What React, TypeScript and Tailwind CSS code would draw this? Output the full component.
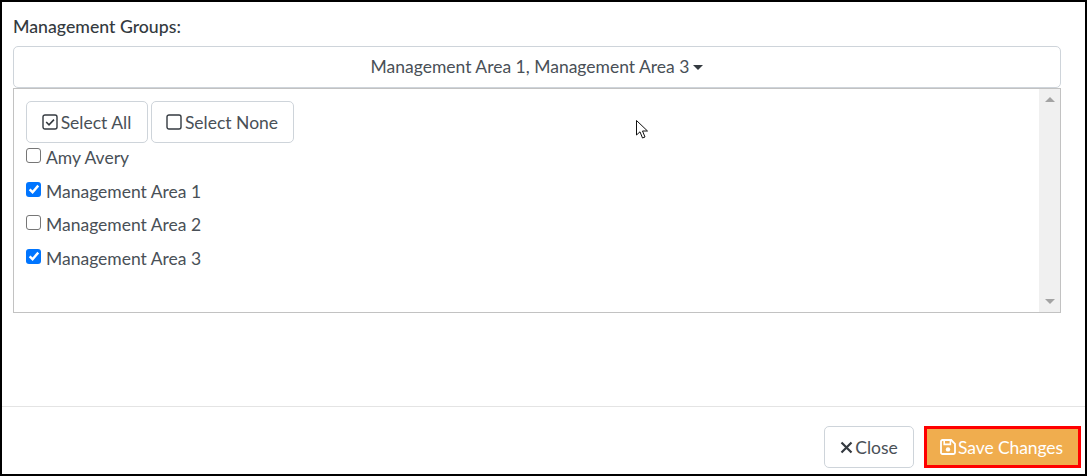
import React from "react";

function CheckRow({ label, checked, className }: { label: string; checked?: boolean; className: string }) {
  return (
    <div className={`flex items-start h-[24px] ${className}`}>
      {checked ? (
        <span className="mt-[1px] w-[15px] h-[15px] rounded-[3px] bg-[#0075ff] flex items-center justify-center">
          <svg width="12" height="12" viewBox="0 0 11 11" fill="none">
            <path d="M1.5 5.8 L4.2 8.4 L9.4 2.4" stroke="#fff" strokeWidth="2.2" />
          </svg>
        </span>
      ) : (
        <span className="mt-[1px] w-[15px] h-[15px] rounded-[3px] border border-[#767676] bg-white" />
      )}
      <span className="ml-[5px] text-[17.5px] leading-[22px] text-[#495057]">{label}</span>
    </div>
  );
}

export default function App() {
  return (
    <div className="w-[1088px] h-[476px] bg-white font-['Lato','Inter',sans-serif] overflow-hidden">
      <div className="w-[1087px] h-[476px] border-2 border-black flex flex-col">
        <div className="flex-1 pl-[11px] pr-[24px] pt-[13px]">
          <div className="text-[17.7px] font-medium leading-[24px] text-[#343a40] h-[31px]">Management Groups:</div>
          <div className="h-[42px] border border-[#ced4da] rounded-[5px] flex items-center justify-center text-[17.5px] text-[#495057]">
            <span>Management Area 1, Management Area 3</span>
            <span className="ml-[4px] w-0 h-0 border-x-[5px] border-x-transparent border-t-[5px] border-t-[#343a40]" />
          </div>
          <div className="h-[225px] border border-[#c2c2c2] flex">
            <div className="flex-1 pl-[12px] pt-[12px]">
              <div className="flex gap-[3px] mb-[4px]">
                <button className="w-[122px] h-[42px] pt-[2px] pr-[1px] border border-[#ced4da] rounded-[5px] flex items-center justify-center text-[17.5px] text-[#495057]">
                  <svg width="16" height="16" viewBox="0 0 16 16" fill="none" className="mr-[3px] relative -top-[1.5px]">
                    <rect x="1" y="1" width="14" height="14" rx="2" stroke="#343a40" strokeWidth="1.4" />
                    <path d="M4.2 8 L7 10.8 L12 5.6" stroke="#343a40" strokeWidth="1.6" />
                  </svg>
                  Select All
                </button>
                <button className="w-[143px] h-[42px] pt-[2px] pr-[1px] border border-[#ced4da] rounded-[5px] flex items-center justify-center text-[17.5px] text-[#495057]">
                  <svg width="16" height="16" viewBox="0 0 16 16" fill="none" className="mr-[3px] relative -top-[1.5px]">
                    <rect x="1" y="1" width="14" height="14" rx="2" stroke="#343a40" strokeWidth="1.4" />
                  </svg>
                  Select None
                </button>
              </div>
              <CheckRow label="Amy Avery" className="mb-[9.5px]" />
              <CheckRow label="Management Area 1" checked className="mb-[9.5px]" />
              <CheckRow label="Management Area 2" className="mb-[9.5px]" />
              <CheckRow label="Management Area 3" checked className="" />
            </div>
            <div className="w-[21px] bg-[#f0f0f0] flex flex-col items-center justify-between py-[8px]">
              <span className="w-0 h-0 border-x-[5px] border-x-transparent border-b-[5px] border-b-[#a3a3a3]" />
              <span className="w-0 h-0 border-x-[5px] border-x-transparent border-t-[5px] border-t-[#a3a3a3]" />
            </div>
          </div>
        </div>
        <div className="h-[68px] border-t border-[#e4e4e4] flex justify-end gap-[10px] pt-[19px] pr-[4px]">
          <button className="w-[90px] h-[42px] pt-[2px] border border-[#ced4da] rounded-[5px] flex items-center justify-center text-[17.5px] text-[#495057]">
            <svg width="13" height="13" viewBox="0 0 13 13" fill="none" className="mr-[2px] relative -top-[1px]">
              <path d="M1.5 1.5 L11.5 11.5 M11.5 1.5 L1.5 11.5" stroke="#343a40" strokeWidth="2.2" />
            </svg>
            Close
          </button>
          <button className="w-[157px] h-[42px] pt-[2px] pr-[2px] border-[3px] border-[#ff0000] bg-[#f0ad4e] flex items-center justify-center text-[17.5px] text-white">
            <svg width="16" height="16" viewBox="0 0 16 16" fill="none" className="mr-[2px] relative -top-[1.5px]">
              <path d="M2.5 1 H11.2 L15 4.8 V13.5 A1.5 1.5 0 0 1 13.5 15 H2.5 A1.5 1.5 0 0 1 1 13.5 V2.5 A1.5 1.5 0 0 1 2.5 1 Z" stroke="#fff" strokeWidth="1.8" />
              <path d="M4.2 1.5 V5.4 H10.4 V1.5" stroke="#fff" strokeWidth="1.6" />
              <circle cx="8" cy="10.4" r="2.2" fill="#fff" />
            </svg>
            <span className="tracking-[-0.1px]">Save Changes</span>
          </button>
        </div>
      </div>
      <svg className="absolute left-[636px] top-[120px]" width="14" height="20" viewBox="0 0 14 20" fill="none">
        <path d="M0.5 0.5 V15 L4 11.8 L6.5 18 L9 17 L6.5 11 H11.5 Z" fill="#fff" stroke="#111" strokeWidth="1" />
      </svg>
    </div>
  );
}
